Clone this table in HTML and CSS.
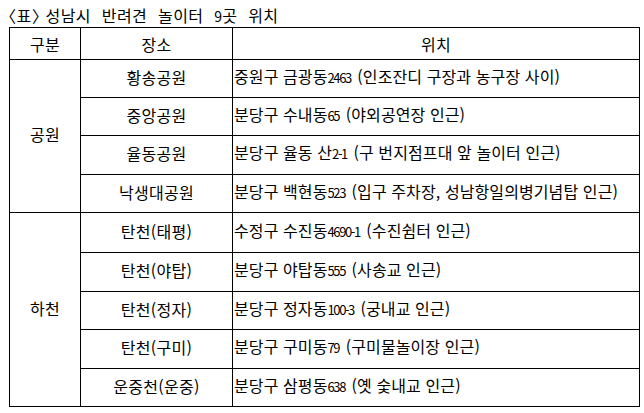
FILE: index.html
```html
<!DOCTYPE html>
<html lang="ko">
<head>
<meta charset="utf-8">
<link rel="stylesheet" href="styles.css">
</head>
<body>
<div class="title"><span class="lead">〈표〉 </span>성남시 반려견 놀이터 <span class="tnum">9</span>곳 위치</div>
<table class="tbl">
  <colgroup>
    <col class="c1"><col class="c2"><col class="c3">
  </colgroup>
  <thead>
    <tr class="hd"><th>구분</th><th>장소</th><th>위치</th></tr>
  </thead>
  <tbody>
    <tr class="r38"><td rowspan="4" class="grp">공원</td><td class="place">황송공원</td><td class="loc">중원구 금광동<span class="num">2463</span> (인조잔디 구장과 농구장 사이)</td></tr>
    <tr class="r38"><td class="place">중앙공원</td><td class="loc">분당구 수내동<span class="num">65</span> (야외공연장 인근)</td></tr>
    <tr class="r39"><td class="place">율동공원</td><td class="loc">분당구 율동 산<span class="num">2-1</span> (구 번지점프대 앞 놀이터 인근)</td></tr>
    <tr class="r38"><td class="place">낙생대공원</td><td class="loc">분당구 백현동<span class="num">523</span> (입구 주차장, 성남항일의병기념탑 인근)</td></tr>
    <tr class="r40"><td rowspan="5" class="grp">하천</td><td class="place">탄천(태평)</td><td class="loc">수정구 수진동<span class="num">4690-1</span> (수진쉼터 인근)</td></tr>
    <tr class="r39"><td class="place">탄천(야탑)</td><td class="loc">분당구 야탑동<span class="num">555</span> (사송교 인근)</td></tr>
    <tr class="r38"><td class="place">탄천(정자)</td><td class="loc">분당구 정자동<span class="num">100-3</span> (궁내교 인근)</td></tr>
    <tr class="r39"><td class="place">탄천(구미)</td><td class="loc">분당구 구미동<span class="num">79</span> (구미물놀이장 인근)</td></tr>
    <tr class="r38"><td class="place">운중천(운중)</td><td class="loc">분당구 삼평동<span class="num">638</span> (옛 숯내교 인근)</td></tr>
  </tbody>
</table>
</body>
</html>
```
FILE: styles.css
```css
html, body {
  margin: 0;
  padding: 0;
  background: #ffffff;
}
body {
  font-family: "Noto Sans CJK KR", "Noto Sans", sans-serif;
  font-size: 16px;
  color: #000000;
}
.title {
  height: 27px;
  box-sizing: border-box;
  padding: 6px 0 0 8px;
  line-height: 18px;
  font-size: 16px;
  letter-spacing: 0.4px;
  word-spacing: 6px;
  white-space: nowrap;
}
.title .lead {
  font-feature-settings: "halt" 1;
  word-spacing: 0;
  letter-spacing: 0.6px;
}
.title .tnum {
  font-size: 14px;
  letter-spacing: 0;
}
.tbl {
  margin-left: 9px;
  border-collapse: collapse;
  table-layout: fixed;
  width: 630px;
}
.c1 { width: 71px; }
.c2 { width: 152px; }
.c3 { width: 407px; }
.tbl th, .tbl td {
  border: 1px solid #000000;
  padding: 0;
  font-weight: normal;
  line-height: 18px;
  letter-spacing: 0.3px;
  white-space: nowrap;
  vertical-align: middle;
}
.tbl th {
  text-align: center;
  padding-top: 1px;
}
.tbl td {
  padding-bottom: 4px;
}
.hd { height: 32px; }
.r38 { height: 38px; }
.r39 { height: 39px; }
.r40 { height: 40px; }
.grp, .place { text-align: center; }
.tbl td.loc {
  text-align: left;
  padding-left: 1px;
  letter-spacing: 0.1px;
}
.num {
  font-size: 13px;
  letter-spacing: -1.4px;
  margin-right: 2px;
}
```
